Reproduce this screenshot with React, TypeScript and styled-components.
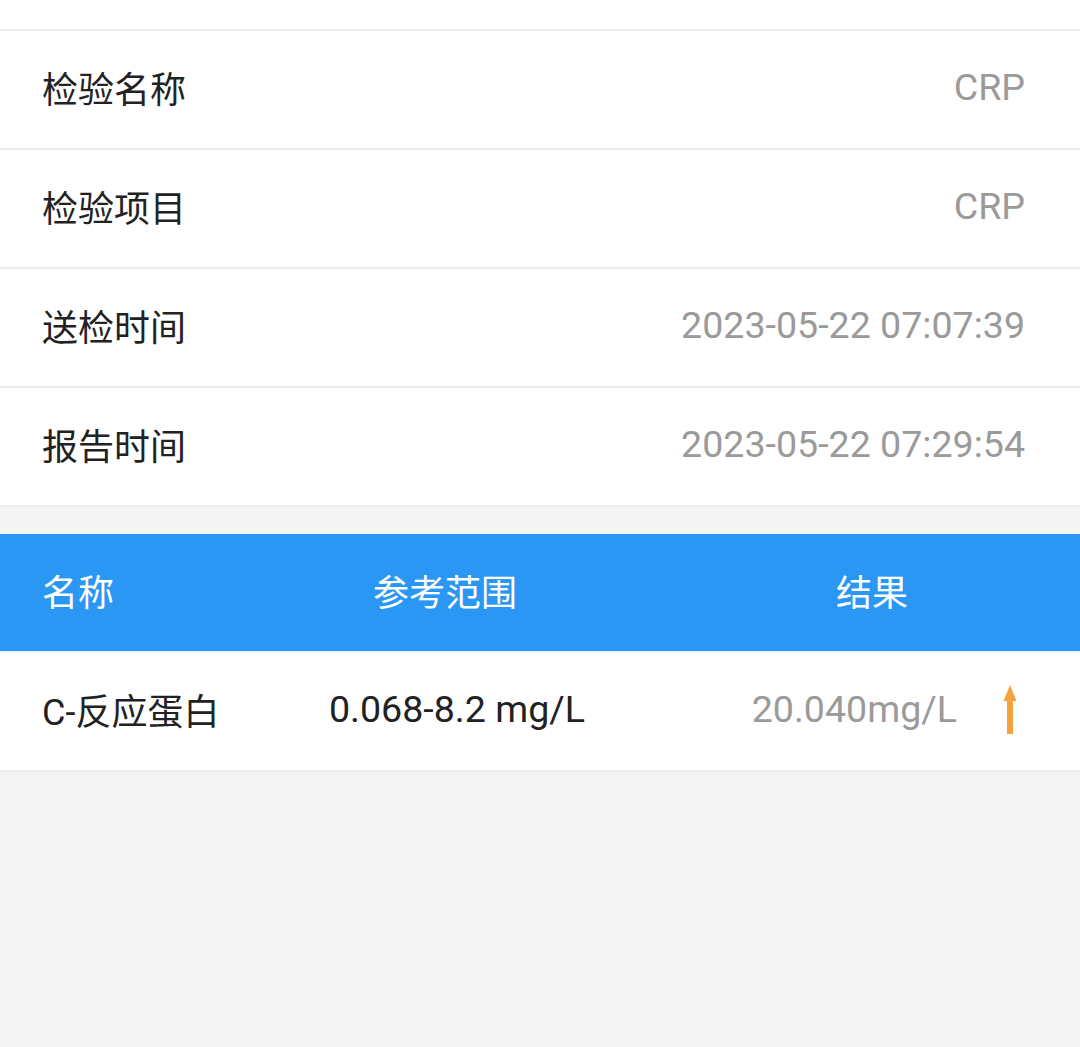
import React from 'react'
import styled, { createGlobalStyle } from 'styled-components'

const GlobalStyle = createGlobalStyle`
  html, body {
    margin: 0;
    padding: 0;
    background: #f4f4f4;
    font-family: Roboto, "Noto Sans CJK SC", sans-serif;
  }
`

const Page = styled.div`
  min-height: 1047px;
  background: #f4f4f4;
`

const InfoCard = styled.div`
  background: #fff;
  padding-top: 29px;
`

const InfoRow = styled.div`
  display: flex;
  align-items: center;
  justify-content: space-between;
  height: 112px;
  padding: 0 55px 5px 42px;
  border-top: 2px solid #ededed;
  font-size: 36px;

  &:last-child {
    border-bottom: 2px solid #ededed;
  }
`

const Label = styled.span`
  color: #222;
`

const Value = styled.span`
  color: #9a9a9a;
  font-size: 37.6px;
`

const Table = styled.div`
  margin-top: 27px;
`

const TableRow = styled.div<{ header?: boolean }>`
  display: grid;
  grid-template-columns: 248px 310px 1fr;
  align-items: center;
  height: 112px;
  padding-left: 42px;
  padding-bottom: 5px;
  background: ${({ header }) => (header ? '#2b97f4' : '#fff')};
  color: ${({ header }) => (header ? '#fff' : '#222')};
  border-bottom: 2px solid ${({ header }) => (header ? '#e6f3fd' : '#ededed')};
  font-size: 36px;
`

const Cell = styled.div<{ align?: 'left' | 'center'; shift?: number }>`
  text-align: ${({ align }) => align || 'left'};
  padding-left: ${({ shift }) => shift || 0}px;
  white-space: nowrap;
`

const RangeText = styled.span`
  font-size: 37.6px;
`

const ResultCell = styled.div<{ header?: boolean }>`
  display: flex;
  align-items: center;
  justify-content: ${({ header }) => (header ? 'center' : 'flex-end')};
  gap: 46px;
  padding-left: 64px;
  padding-right: ${({ header }) => (header ? '0' : '63px')};
`

const ResultValue = styled.span`
  color: #9a9a9a;
  font-size: 37.6px;
`

const UpArrow = () => (
  <svg width="14" height="49" viewBox="0 0 14 49">
    <polygon points="7,0 0.5,16 13.5,16" fill="#f5a33f" />
    <rect x="4" y="14" width="6" height="35" fill="#f5a33f" />
  </svg>
)

const info = [
  { label: '检验名称', value: 'CRP' },
  { label: '检验项目', value: 'CRP' },
  { label: '送检时间', value: '2023-05-22 07:07:39' },
  { label: '报告时间', value: '2023-05-22 07:29:54' },
]

export default function App() {
  return (
    <Page>
      <GlobalStyle />
      <InfoCard>
        {info.map((item) => (
          <InfoRow key={item.label}>
            <Label>{item.label}</Label>
            <Value>{item.value}</Value>
          </InfoRow>
        ))}
      </InfoCard>
      <Table>
        <TableRow header>
          <Cell>名称</Cell>
          <Cell align="center">参考范围</Cell>
          <ResultCell header>结果</ResultCell>
        </TableRow>
        <TableRow>
          <Cell>C-反应蛋白</Cell>
          <Cell align="center" shift={24}>
            <RangeText>0.068-8.2 mg/L</RangeText>
          </Cell>
          <ResultCell>
            <ResultValue>20.040mg/L</ResultValue>
            <UpArrow />
          </ResultCell>
        </TableRow>
      </Table>
    </Page>
  )
}
